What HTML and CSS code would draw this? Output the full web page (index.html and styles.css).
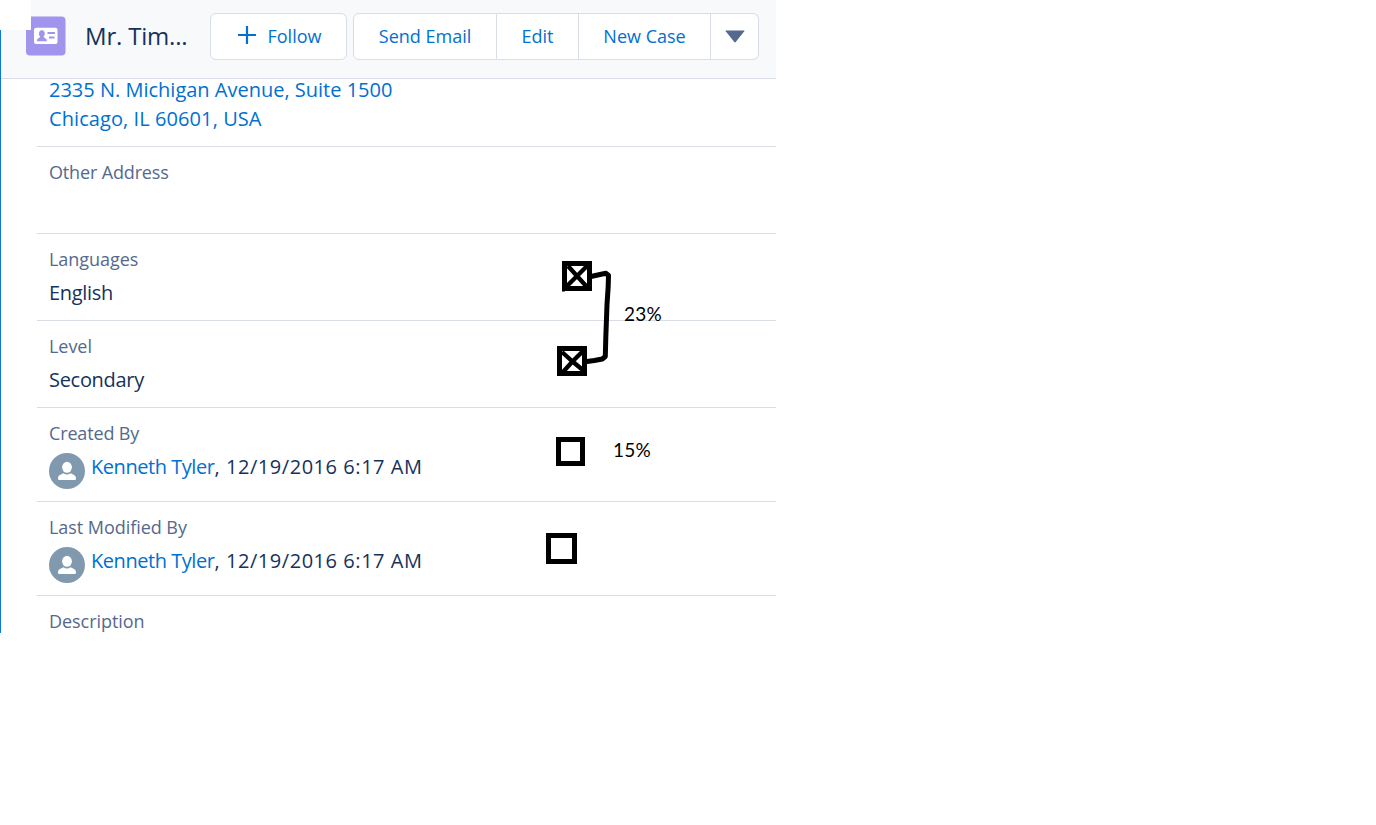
FILE: index.html
```html
<!DOCTYPE html>
<html lang="en">
<head>
<meta charset="utf-8">
<title>Contact</title>
<link rel="stylesheet" href="styles.css">
</head>
<body>
<main class="panel">
  <header class="header">
    <svg class="contact-icon" viewBox="0 0 40 40" aria-hidden="true">
      <rect y=".5" width="39.500" height="39" rx="4" fill="#a094ed"/>
      <rect x="8" y="11.800" width="23.500" height="16.200" rx="2" fill="#fff"/>
      <path d="M15.800 14.300c2 0 3 1.500 3 3.300 0 1.500-.6 2.300-1.200 3 0 1.800 3.200 1.400 3.200 3.700v1h-9.800v-1c0-2.300 3.100-1.900 3.100-3.700-.6-.7-1.200-1.500-1.200-3C12.900 15.800 14 14.300 15.800 14.300zM21.500 16h7.500v2h-7.500zM23 20.500h5.500v2h-5.500z" fill="#a094ed"/>
    </svg>
    <h1 class="title">Mr. Tim...</h1>
    <button class="button follow"><svg class="plus" viewBox="0 0 18 18" aria-hidden="true"><path d="M9 0v18M0 9h18" stroke="#0070d2" stroke-width="2.200"/></svg><span>Follow</span></button>
    <div class="button-group">
      <button class="button send">Send Email</button>
      <button class="button edit">Edit</button>
      <button class="button case">New Case</button>
      <button class="button more" aria-label="More"><svg class="caret" viewBox="0 0 20 13" aria-hidden="true"><path d="M1 .5h18q.8 0 .3.700L10.700 12q-.7.800-1.400 0L.7 1.200Q.2.500 1 .5z" fill="#54698d"/></svg></button>
    </div>
  </header>
  <section class="details">
    <div class="row address"><a class="link street">2335 N. Michigan Avenue, Suite 1500</a><a class="link city">Chicago, IL 60601, USA</a></div>
    <div class="row"><span class="label tight">Other Address</span></div>
    <div class="row"><span class="label">Languages</span><span class="value">English</span></div>
    <div class="row"><span class="label">Level</span><span class="value">Secondary</span></div>
    <div class="row user-row"><span class="label tight">Created By</span>
      <div class="user"><svg class="avatar" viewBox="0 0 36 36" aria-hidden="true"><circle cx="18" cy="18" r="18" fill="#8199af"/><ellipse cx="18" cy="14.300" rx="4.900" ry="5.500" fill="#fff"/><path d="M9 25.500c0-3 2.500-4 5.500-5.200 2 1.600 5 1.600 7 0 3 1.200 5.500 2.200 5.500 5.200 0 1-.6 1.500-1.500 1.500h-15C9.600 27 9 26.500 9 25.500z" fill="#fff"/></svg><span class="value"><a class="link name">Kenneth Tyler</a><span class="date">, 12/19/2016 6:17 AM</span></span></div>
    </div>
    <div class="row user-row"><span class="label">Last Modified By</span>
      <div class="user"><svg class="avatar" viewBox="0 0 36 36" aria-hidden="true"><circle cx="18" cy="18" r="18" fill="#8199af"/><ellipse cx="18" cy="14.300" rx="4.900" ry="5.500" fill="#fff"/><path d="M9 25.500c0-3 2.500-4 5.500-5.200 2 1.600 5 1.600 7 0 3 1.200 5.500 2.200 5.500 5.200 0 1-.6 1.500-1.500 1.500h-15C9.600 27 9 26.500 9 25.500z" fill="#fff"/></svg><span class="value"><a class="link name">Kenneth Tyler</a><span class="date">, 12/19/2016 6:17 AM</span></span></div>
    </div>
    <div class="row last"><span class="label">Description</span></div>
  </section>
  <div class="corner"></div>
  <div class="edge"></div>
  <svg class="marks" viewBox="530 250 150 330" fill="none" stroke="#000" stroke-width="5" aria-hidden="true">
    <path d="M564.500 263.500h25v25h-25zM559.500 348.500h25v25h-25zM558.500 439.500h24v24h-24zM548.500 535.500h26v26h-26z"/>
    <path d="M563.500 286v5.500" stroke-width="3"/>
    <path d="M568 266l9 10 10 11M587 266l-10 10-11 11M562 352l10 9 12 10M583 351l-11 11-9 10" stroke-width="4.300"/>
    <path d="M591 276.500l9-2 6-1.200 2.500 2.200-.3 11-1.200 18-1.200 33-.5 19-3 2.500-8 1.500-9 1.200" stroke-linejoin="round"/>
  </svg>
  <span class="percent top">23%</span>
  <span class="percent bottom">15%</span>
</main>
</body>
</html>
```

FILE: styles.css
```css
* { box-sizing: border-box; }
body {
  margin: 0;
  background: #fff;
  color: #16325c;
  font-family: "Open Sans", "Noto Sans", sans-serif;
}
.panel { position: relative; width: 776px; height: 633px; overflow: hidden; }
.header {
  display: flex;
  align-items: flex-start;
  height: 79px;
  padding: 13px 17px 0 26px;
  background: #f7f9fb;
  border-bottom: 1px solid #d8dde6;
}
.contact-icon { width: 40px; height: 40px; margin-top: 3px; flex: none; }
.title {
  width: 125px;
  margin: 0 0 0 19px;
  font-size: 24px;
  font-weight: 400;
  line-height: 46px;
  letter-spacing: -.2px;
  white-space: nowrap;
}
.button {
  display: flex;
  align-items: center;
  justify-content: center;
  height: 47px;
  padding: 0 0 2px;
  border: 1px solid #d8dde6;
  background: #fff;
  color: #0070d2;
  font: 400 18px "Open Sans", "Noto Sans", sans-serif;
  white-space: nowrap;
}
.follow { width: 137px; padding-left: 2px; gap: 12px; border-radius: 6px; }
.plus { width: 18px; height: 18px; margin-top: -1px; }
.button-group { display: flex; margin-left: 6px; }
.button-group .button + .button { border-left: 0; }
.button-group .send { width: 144px; border-radius: 6px 0 0 6px; }
.edit { width: 82px; }
.case { width: 132px; }
.button-group .more { width: 48px; border-radius: 0 6px 6px 0; }
.caret { width: 20px; height: 13px; margin-top: 2px; }
.details { margin-left: 37px; }
.row {
  display: flex;
  flex-direction: column;
  height: 87px;
  padding: 12px 0 0 12px;
  border-bottom: 1px solid #d8dde6;
  white-space: nowrap;
}
.address { height: 68px; padding-top: 0; }
.user-row { height: 94px; }
.last { border: 0; }
.label { color: #54698d; font-size: 18px; line-height: 27px; letter-spacing: -.05px; }
.tight { letter-spacing: -.15px; }
.value { font-size: 20px; line-height: 29px; margin-top: 5px; letter-spacing: -.3px; }
.link { color: #0070d2; font-size: 20px; line-height: 29px; }
.street { margin-top: -4px; }
.city { letter-spacing: .08px; }
.name { letter-spacing: -.45px; }
.date { letter-spacing: .55px; }
.user { display: flex; align-items: flex-start; gap: 6px; }
.avatar { width: 36px; height: 36px; margin-top: 6px; flex: none; }
.corner { position: absolute; left: 0; top: 0; width: 31px; height: 30px; background: #fff; }
.edge { position: absolute; left: 0; top: 30px; width: 1px; bottom: 0; background: #0d7ad5; }
.marks { position: absolute; left: 530px; top: 250px; width: 150px; height: 330px; }
.percent { position: absolute; color: #000; font: 400 19px/24px Lato, sans-serif; letter-spacing: .2px; }
.top { left: 624px; top: 302px; }
.bottom { left: 613px; top: 438px; }
```
